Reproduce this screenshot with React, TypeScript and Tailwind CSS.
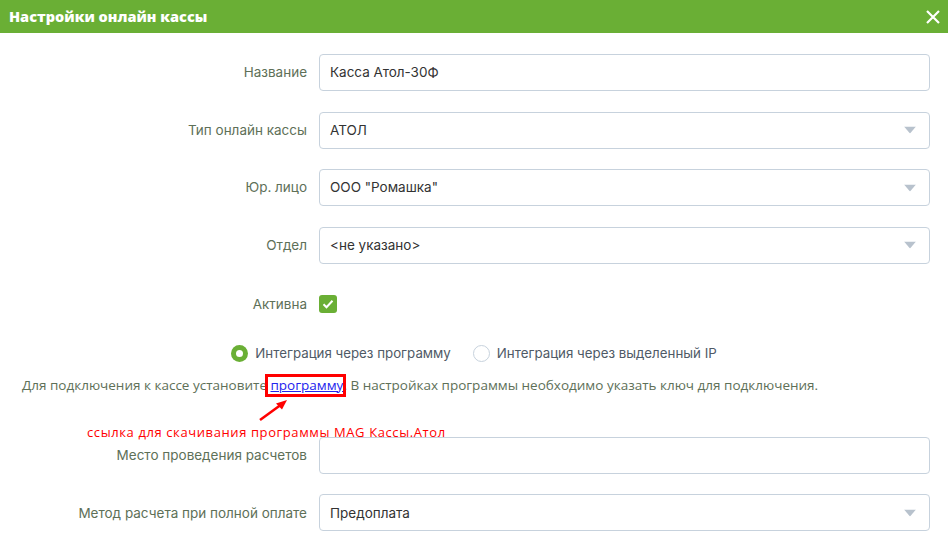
import { useState } from "react";

const labelCls =
  "w-[307px] shrink-0 text-right text-[13.5px] text-[#5e7058] font-['Inter',sans-serif]";

const Caret = () => (
  <svg width="12" height="7" viewBox="0 0 12 7" className="absolute right-[13px] top-1/2 -translate-y-1/2">
    <path d="M0 0h12L6 7z" fill="#b8c2cd" />
  </svg>
);

const Field = ({ label, value, select }: { label: string; value?: string; select?: boolean }) => (
  <div className="flex items-center">
    <div className={labelCls}>{label}</div>
    <div className="relative ml-[12px] h-[37px] flex-1 rounded-[4px] border border-[#c7d2dd] bg-white">
      <div className="flex h-full items-center pl-[10px] text-[13.5px] text-[#333] font-['Inter',sans-serif]">
        {value}
      </div>
      {select && <Caret />}
    </div>
  </div>
);

const Radio = ({ on }: { on: boolean }) =>
  on ? (
    <span className="flex h-[17px] w-[17px] items-center justify-center rounded-full bg-[#6aaf35]">
      <span className="h-[7px] w-[7px] rounded-full bg-white" />
    </span>
  ) : (
    <span className="h-[17px] w-[17px] rounded-full border border-[#c7d2dd]" />
  );

export default function App() {
  const [mode, setMode] = useState(0);

  return (
    <div className="w-[948px] h-[542px] overflow-hidden bg-white">
      <div className="flex h-[33px] items-center justify-between bg-[#6aaf35] pl-[9px] pr-[7px]">
        <span className="text-[14.5px] font-extrabold text-white font-['Open_Sans',sans-serif]">
          Настройки онлайн кассы
        </span>
        <svg width="16" height="16" viewBox="0 0 16 16">
          <path d="M2 2l12 12M14 2L2 14" stroke="#fff" strokeWidth="2.2" />
        </svg>
      </div>

      <div className="pr-[18px] pt-[21px]">
        <div className="flex flex-col gap-[20.5px]">
          <Field label="Название" value="Касса Атол-30Ф" />
          <Field label="Тип онлайн кассы" value="АТОЛ" select />
          <Field label="Юр. лицо" value='ООО "Ромашка"' select />
          <Field label="Отдел" value="<не указано>" select />
        </div>

        <div className="mt-[30px] flex items-center">
          <div className={labelCls}>Активна</div>
          <div className="ml-[12px] flex h-[18px] w-[18px] items-center justify-center rounded-[3px] bg-[#6aaf35]">
            <svg width="12" height="10" viewBox="0 0 12 10">
              <path d="M1.5 5.2l3 3 6-6.4" fill="none" stroke="#fff" strokeWidth="2" />
            </svg>
          </div>
        </div>
      </div>

      <div className="mt-[30px] flex items-center justify-center gap-[22px] text-[13.3px] text-[#4f5a66] font-['Inter',sans-serif]">
        <label className="flex items-center gap-[7px] cursor-pointer" onClick={() => setMode(0)}>
          <Radio on={mode === 0} />
          Интеграция через программу
        </label>
        <label className="flex items-center gap-[7px] cursor-pointer" onClick={() => setMode(1)}>
          <Radio on={mode === 1} />
          Интеграция через выделенный IP
        </label>
      </div>

      <p className="mt-[11px] pl-[22px] text-[13.5px] leading-[20px] text-[#5e7058] font-['Open_Sans',sans-serif]">
        Для подключения к кассе установите{" "}
        <span className="relative">
          <a href="#" className="text-[#2323ee] underline">программу</a>
          <span className="absolute -left-[5px] -right-[3px] -top-[2px] -bottom-[3px] border-[3px] border-[#f00]" />
          <svg width="34" height="24" viewBox="0 0 34 24" className="absolute left-[-12px] top-[22px]">
            <path d="M2 22L24 6" stroke="#f00" strokeWidth="2.5" />
            <path d="M29 2l-11 3.5 6 6z" fill="#f00" />
          </svg>
        </span>
        . В настройках программы необходимо указать ключ для подключения.
      </p>

      <div className="mt-[30px] pl-[87px] text-[13px] leading-[14px] tracking-[0.6px] text-[#f00] font-['Open_Sans',sans-serif]">
        ссылка для скачивания программы MAG Кассы.Атол
      </div>

      <div className="mt-[-2px] flex flex-col gap-[20.5px] pr-[18px]">
        <Field label="Место проведения расчетов" value="" />
        <Field label="Метод расчета при полной оплате" value="Предоплата" select />
      </div>
    </div>
  );
}
